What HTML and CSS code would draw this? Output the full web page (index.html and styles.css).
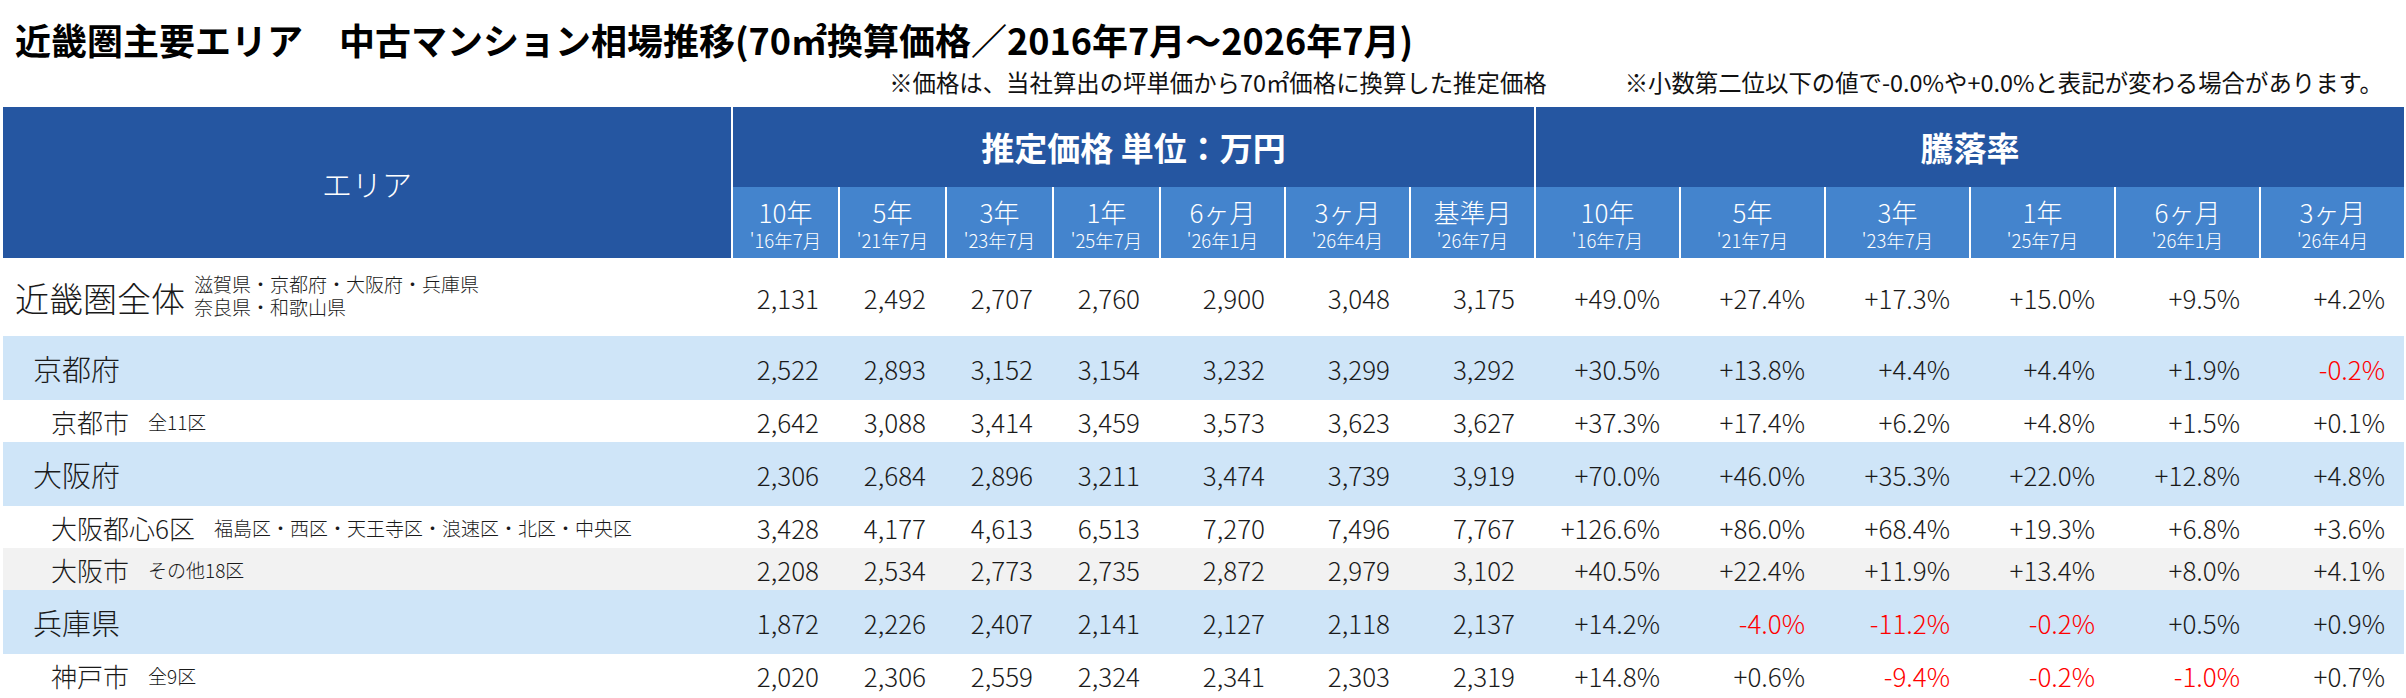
FILE: index.html
```html
<!DOCTYPE html>
<html lang="ja">
<head>
<meta charset="utf-8">
<title>近畿圏主要エリア 中古マンション相場推移</title>
<link rel="stylesheet" href="styles.css">
</head>
<body>
<div class="page">
  <h1 class="title">近畿圏主要エリア　中古マンション相場推移(70㎡換算価格／2016年7月〜2026年7月)</h1>
  <div class="notes">
    <span>※価格は、当社算出の坪単価から70㎡価格に換算した推定価格</span>
    <span>※小数第二位以下の値で-0.0%や+0.0%と表記が変わる場合があります。</span>
  </div>
  <table class="market">
    <colgroup>
      <col class="c-area">
      <col class="c-p"><col class="c-p"><col class="c-p"><col class="c-p">
      <col class="c-pm"><col class="c-pm"><col class="c-pm">
      <col class="c-r"><col class="c-r"><col class="c-r"><col class="c-r"><col class="c-r"><col class="c-r">
    </colgroup>
    <thead>
      <tr class="h-group">
        <th class="h-area" rowspan="2">エリア</th>
        <th colspan="7">推定価格 単位：万円</th>
        <th colspan="6">騰落率</th>
      </tr>
      <tr class="h-sub">
        <th><div class="sh"><span class="per">10年</span><span class="dt">'16年7月</span></div></th>
        <th><div class="sh"><span class="per">5年</span><span class="dt">'21年7月</span></div></th>
        <th><div class="sh"><span class="per">3年</span><span class="dt">'23年7月</span></div></th>
        <th><div class="sh"><span class="per">1年</span><span class="dt">'25年7月</span></div></th>
        <th><div class="sh"><span class="per">6ヶ月</span><span class="dt">'26年1月</span></div></th>
        <th><div class="sh"><span class="per">3ヶ月</span><span class="dt">'26年4月</span></div></th>
        <th><div class="sh"><span class="per">基準月</span><span class="dt">'26年7月</span></div></th>
        <th><div class="sh"><span class="per">10年</span><span class="dt">'16年7月</span></div></th>
        <th><div class="sh"><span class="per">5年</span><span class="dt">'21年7月</span></div></th>
        <th><div class="sh"><span class="per">3年</span><span class="dt">'23年7月</span></div></th>
        <th><div class="sh"><span class="per">1年</span><span class="dt">'25年7月</span></div></th>
        <th><div class="sh"><span class="per">6ヶ月</span><span class="dt">'26年1月</span></div></th>
        <th><div class="sh"><span class="per">3ヶ月</span><span class="dt">'26年4月</span></div></th>
      </tr>
    </thead>
    <tbody>
      <tr class="r-total">
        <td class="lbl"><div class="label l-total"><span class="name">近畿圏全体</span><span class="sub"><span class="ln">滋賀県・京都府・大阪府・兵庫県</span><span class="ln">奈良県・和歌山県</span></span></div></td>
        <td>2,131</td><td>2,492</td><td>2,707</td><td>2,760</td><td>2,900</td><td>3,048</td><td>3,175</td>
        <td>+49.0%</td><td>+27.4%</td><td>+17.3%</td><td>+15.0%</td><td>+9.5%</td><td>+4.2%</td>
      </tr>
      <tr class="r-pref">
        <td class="lbl"><div class="label l-pref"><span class="name">京都府</span></div></td>
        <td>2,522</td><td>2,893</td><td>3,152</td><td>3,154</td><td>3,232</td><td>3,299</td><td>3,292</td>
        <td>+30.5%</td><td>+13.8%</td><td>+4.4%</td><td>+4.4%</td><td>+1.9%</td><td class="neg">-0.2%</td>
      </tr>
      <tr class="r-city">
        <td class="lbl"><div class="label l-city"><span class="name">京都市</span><span class="sub">全11区</span></div></td>
        <td>2,642</td><td>3,088</td><td>3,414</td><td>3,459</td><td>3,573</td><td>3,623</td><td>3,627</td>
        <td>+37.3%</td><td>+17.4%</td><td>+6.2%</td><td>+4.8%</td><td>+1.5%</td><td>+0.1%</td>
      </tr>
      <tr class="r-pref">
        <td class="lbl"><div class="label l-pref"><span class="name">大阪府</span></div></td>
        <td>2,306</td><td>2,684</td><td>2,896</td><td>3,211</td><td>3,474</td><td>3,739</td><td>3,919</td>
        <td>+70.0%</td><td>+46.0%</td><td>+35.3%</td><td>+22.0%</td><td>+12.8%</td><td>+4.8%</td>
      </tr>
      <tr class="r-city">
        <td class="lbl"><div class="label l-city"><span class="name">大阪都心6区</span><span class="sub">福島区・西区・天王寺区・浪速区・北区・中央区</span></div></td>
        <td>3,428</td><td>4,177</td><td>4,613</td><td>6,513</td><td>7,270</td><td>7,496</td><td>7,767</td>
        <td>+126.6%</td><td>+86.0%</td><td>+68.4%</td><td>+19.3%</td><td>+6.8%</td><td>+3.6%</td>
      </tr>
      <tr class="r-city r-alt">
        <td class="lbl"><div class="label l-city"><span class="name">大阪市</span><span class="sub">その他18区</span></div></td>
        <td>2,208</td><td>2,534</td><td>2,773</td><td>2,735</td><td>2,872</td><td>2,979</td><td>3,102</td>
        <td>+40.5%</td><td>+22.4%</td><td>+11.9%</td><td>+13.4%</td><td>+8.0%</td><td>+4.1%</td>
      </tr>
      <tr class="r-pref">
        <td class="lbl"><div class="label l-pref"><span class="name">兵庫県</span></div></td>
        <td>1,872</td><td>2,226</td><td>2,407</td><td>2,141</td><td>2,127</td><td>2,118</td><td>2,137</td>
        <td>+14.2%</td><td class="neg">-4.0%</td><td class="neg">-11.2%</td><td class="neg">-0.2%</td><td>+0.5%</td><td>+0.9%</td>
      </tr>
      <tr class="r-city">
        <td class="lbl"><div class="label l-city"><span class="name">神戸市</span><span class="sub">全9区</span></div></td>
        <td>2,020</td><td>2,306</td><td>2,559</td><td>2,324</td><td>2,341</td><td>2,303</td><td>2,319</td>
        <td>+14.8%</td><td>+0.6%</td><td class="neg">-9.4%</td><td class="neg">-0.2%</td><td class="neg">-1.0%</td><td>+0.7%</td>
      </tr>
    </tbody>
  </table>
</div>
</body>
</html>
```

FILE: styles.css
```css
html, body {
  margin: 0;
  padding: 0;
  background: #ffffff;
}

body {
  font-family: "Noto Sans CJK JP", "Noto Sans", sans-serif;
  color: #1a1a1a;
}

.page {
  padding: 16px 3px 0 3px;
  width: 2400px;
}

.title {
  margin: 0;
  padding-left: 12px;
  height: 46px;
  line-height: 46px;
  font-size: 36px;
  font-weight: 700;
  color: #000;
  white-space: nowrap;
}

.notes {
  display: flex;
  justify-content: flex-end;
  gap: 78px;
  padding-right: 20px;
  height: 40px;
  line-height: 40px;
  margin-bottom: 5px;
  font-size: 23.4px;
  font-weight: 400;
  color: #111;
  white-space: nowrap;
}

.market {
  table-layout: fixed;
  border-collapse: separate;
  border-spacing: 0;
  width: 2400px;
}

.c-area { width: 728px; }
.c-p { width: 107px; }
.c-pm { width: 125px; }
.c-r { width: 145px; }

.market th {
  padding: 0;
  color: #fff;
  text-align: center;
  vertical-align: middle;
  border-left: 2px solid #fff;
  box-sizing: border-box;
}

.h-group th {
  height: 80px;
  background: #2556a1;
  font-size: 33px;
  font-weight: 700;
}

.market th.h-area {
  border-left: none;
  background: #2556a1;
  font-size: 30px;
  font-weight: 300;
}

.h-sub th {
  height: 71px;
  background: #4484cd;
  font-weight: 300;
}

.sh {
  display: flex;
  flex-direction: column;
  align-items: center;
  padding-top: 3px;
}

.sh .per {
  font-size: 26px;
  line-height: 33px;
}

.sh .dt {
  font-size: 18.5px;
  line-height: 25px;
}

.market td {
  padding: 0 19px 0 0;
  text-align: right;
  vertical-align: middle;
  font-size: 26px;
  font-weight: 300;
  white-space: nowrap;
}

.market td.lbl {
  padding: 0;
  text-align: left;
}

.market td.neg {
  color: #ff0000;
}

.r-total td { height: 78px; }
.r-pref td { height: 64px; background: #cfe5f8; }
.r-city td { height: 42px; }
.r-alt td { background: #f2f2f2; }

.label {
  display: flex;
  align-items: center;
  white-space: nowrap;
}

.label .name {
  font-weight: 300;
}

.label .sub {
  font-size: 19px;
  font-weight: 300;
}

.l-total {
  padding-left: 12px;
  gap: 9px;
}

.l-total .name {
  font-size: 34px;
}

.l-total .sub {
  display: flex;
  flex-direction: column;
  margin-top: -4px;
}

.l-total .ln {
  line-height: 23px;
}

.l-pref {
  padding-left: 30px;
}

.l-pref .name {
  font-size: 29px;
}

.l-city {
  padding-left: 48px;
  gap: 19px;
}

.l-city .name {
  font-size: 26px;
}
```
